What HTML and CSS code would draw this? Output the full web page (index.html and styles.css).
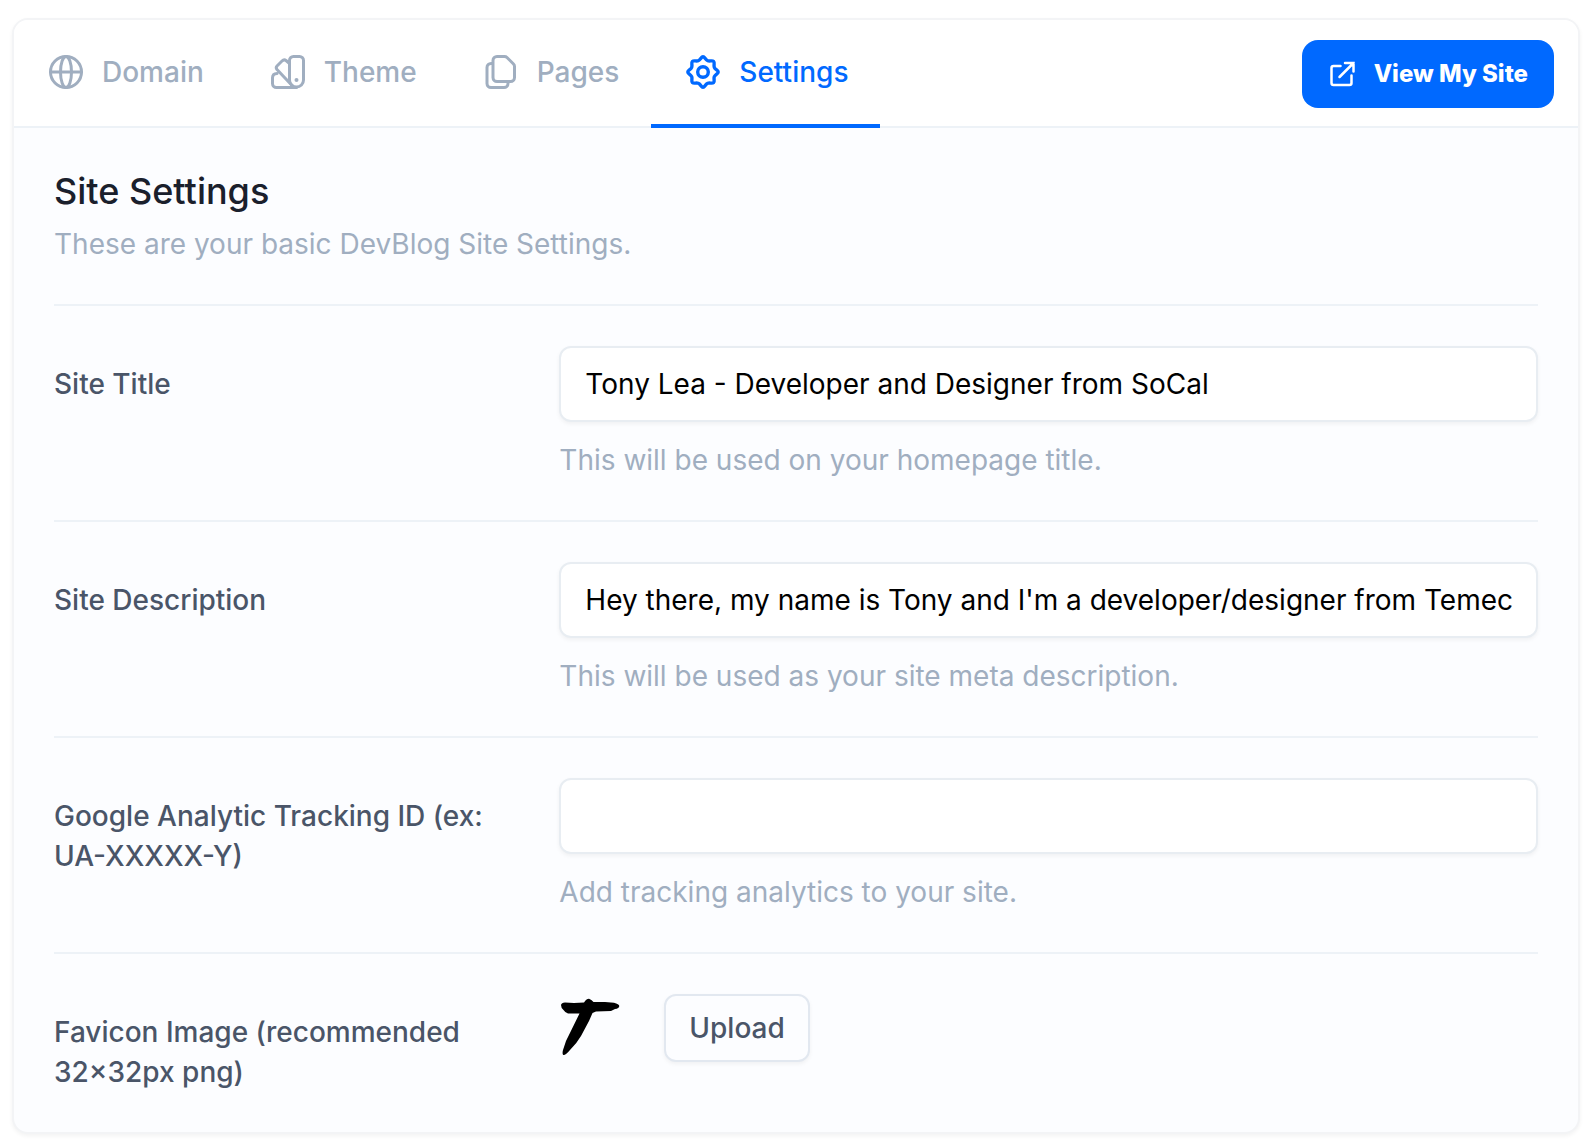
FILE: index.html
```html
<!DOCTYPE html>
<html lang="en">
<head>
<meta charset="utf-8">
<meta name="viewport" content="width=device-width, initial-scale=1">
<title>Site Settings</title>
<link rel="stylesheet" href="styles.css">
</head>
<body>
<main class="card">
  <header class="card-header">
    <nav class="tabs" aria-label="Site sections">
      <a class="tab" href="#domain">
        <svg class="tab-icon" viewBox="0 0 40 40" aria-hidden="true"><circle cx="20" cy="20" r="15.5"/><ellipse cx="20" cy="20" rx="5.5" ry="15.5"/><path d="M4.500 20h31"/></svg>
        <span>Domain</span>
      </a>
      <a class="tab" href="#theme">
        <svg class="tab-icon" viewBox="0 0 40 40" aria-hidden="true"><path d="M21.500 28V8.500a4 4 0 0 1 4-4h6a4 4 0 0 1 4 4V28a7 7 0 0 1-14 0z"/><path d="M28.500 35.500H8.500a4 4 0 0 1-4-4V26q0-4.500 4.500-4.500M21.500 11.500 18 8.500q-2-1.500-4 .5L9 14q-1.500 1.500 0 3.500L25 34.500"/><circle class="dot" cx="28.500" cy="28" r="2"/></svg>
        <span>Theme</span>
      </a>
      <a class="tab" href="#pages">
        <svg class="tab-icon" viewBox="0 0 40 40" aria-hidden="true"><path d="M16 4.500h7.500q1.500 0 2.500 1L32.500 12q1 1 1 2.500v11a4 4 0 0 1-4 4H16a4 4 0 0 1-4-4v-17a4 4 0 0 1 4-4z"/><path d="M11.500 11.500H10a4 4 0 0 0-4 4v16a4 4 0 0 0 4 4h13a4 4 0 0 0 4-4v-2"/></svg>
        <span>Pages</span>
      </a>
      <a class="tab tab-active" href="#settings" aria-current="page">
        <svg class="tab-icon" viewBox="0 0 40 40" aria-hidden="true"><circle cx="20" cy="20" r="5.300"/><path d="M20 4.800C21.900 4.800 22 7.600 24.700 8.700C26.800 9.600 29.200 8 30.600 9.400C32 10.800 30.400 13.200 31.300 15.300C32.400 18 35.200 18.100 35.200 20C35.200 21.900 32.400 22 31.300 24.700C30.400 26.800 32 29.200 30.600 30.600C29.200 32 26.800 30.400 24.700 31.300C22 32.400 21.900 35.200 20 35.200C18.100 35.200 18 32.400 15.300 31.300C13.200 30.400 10.800 32 9.400 30.600C8 29.200 9.600 26.800 8.700 24.700C7.600 22 4.800 21.900 4.800 20C4.800 18.100 7.600 18 8.700 15.300C9.600 13.200 8 10.800 9.400 9.400C10.800 8 13.200 9.600 15.300 8.700C18 7.600 18.100 4.800 20 4.800z"/></svg>
        <span>Settings</span>
      </a>
    </nav>
    <a class="view-button" href="#site">
      <svg class="view-icon" viewBox="0 0 28 28" aria-hidden="true"><path d="M12.500 6H5.500a2 2 0 0 0-2 2v15a2 2 0 0 0 2 2h16a2 2 0 0 0 2-2v-7.500M17 3h8.500v8.500M25.500 3 11.500 17"/></svg>
      <span>View My Site</span>
    </a>
  </header>
  <form class="settings">
    <div class="intro">
      <h1 class="title">Site Settings</h1>
      <p class="subtitle">These are your basic DevBlog Site Settings.</p>
    </div>
    <div class="row">
      <label class="label" for="site-title">Site Title</label>
      <div class="field">
        <input class="input" id="site-title" type="text" value="Tony Lea - Developer and Designer from SoCal">
        <p class="help">This will be used on your homepage title.</p>
      </div>
    </div>
    <div class="row">
      <label class="label" for="site-description">Site Description</label>
      <div class="field">
        <input class="input" id="site-description" type="text" value="Hey there, my name is Tony and I'm a developer/designer from Temecula">
        <p class="help">This will be used as your site meta description.</p>
      </div>
    </div>
    <div class="row">
      <label class="label" for="tracking-id">Google Analytic Tracking ID (ex: UA-XXXXX-Y)</label>
      <div class="field">
        <input class="input" id="tracking-id" type="text">
        <p class="help">Add tracking analytics to your site.</p>
      </div>
    </div>
    <div class="row">
      <label class="label" for="upload">Favicon Image (recommended 32×32px png)</label>
      <div class="field upload-field">
        <svg class="favicon" viewBox="0 0 64 64" role="img" aria-label="Current favicon"><path d="M2 11Q2.500 8.500 6 8.500L15 9L25 8.500Q27 5 30 4.800Q32.500 5.500 34.500 8L46 8L55 8.700Q60 10 60.300 12Q60 14.500 56 15L52 17L37 17.500L33.500 19L30 27L22 42Q18 49 11 56Q6.500 61.500 4.300 61Q3 60 4 56L7 47L20.500 19.500L9 19.500Q6 18.500 4.500 16Q2 14 2 11z"/></svg>
        <button class="upload-button" id="upload" type="button">Upload</button>
      </div>
    </div>
  </form>
</main>
</body>
</html>
```

FILE: styles.css
```css
* {
  box-sizing: border-box;
}

body {
  margin: 0;
  padding: 18px 14px 12px 12px;
  background: #fff;
  color: #4a5568;
  font-family: Inter, "Liberation Sans", sans-serif;
  font-size: 28px;
  line-height: 40px;
}

.card {
  overflow: hidden;
  border: 2px solid #f3f4f6;
  border-radius: 16px;
  background: #fcfdff;
  box-shadow: 0 2px 4px rgba(0, 0, 0, 0.05);
}

.card-header {
  display: flex;
  align-items: flex-start;
  justify-content: space-between;
  padding-right: 24px;
  border-bottom: 2px solid #edf2f7;
  background: #fff;
}

.tabs {
  display: flex;
  margin-bottom: -2px;
}

.tab {
  display: flex;
  align-items: center;
  gap: 16px;
  padding: 32px;
  border-bottom: 4px solid transparent;
  color: #a0aec0;
  font-weight: 500;
  text-decoration: none;
}

.tab-active {
  border-color: #0069ff;
  color: #0069ff;
}

.tab-icon {
  width: 40px;
  height: 40px;
  fill: none;
  stroke: currentColor;
  stroke-width: 3;
  stroke-linecap: round;
  stroke-linejoin: round;
}

.tab-active .tab-icon {
  stroke-width: 3.4;
}

.dot {
  fill: currentColor;
  stroke: none;
}

.view-button {
  display: flex;
  align-items: center;
  gap: 18px;
  margin-top: 20px;
  padding: 14px 26px;
  border-radius: 16px;
  background: #0069ff;
  color: #fff;
  font-size: 24px;
  font-weight: 800;
  text-decoration: none;
}

.view-icon {
  width: 28px;
  height: 28px;
  fill: none;
  stroke: currentColor;
  stroke-width: 2.5;
  stroke-linecap: round;
}

.settings {
  padding: 40px;
}

.intro {
  padding-bottom: 40px;
}

.title {
  margin: 0;
  color: #1a202c;
  font-size: 36px;
  font-weight: 500;
  line-height: 46px;
}

.subtitle {
  margin: 10px 0 0;
  color: #a0aec0;
}

.row {
  display: grid;
  grid-template-columns: repeat(3, 1fr);
  column-gap: 32px;
  padding: 40px 0;
  border-top: 2px solid #edf2f7;
}

.row:last-child {
  padding-bottom: 0;
}

.label {
  padding-top: 18px;
  font-weight: 500;
}

.field {
  grid-column: span 2;
}

.input {
  display: block;
  width: 100%;
  height: 76px;
  padding: 0 24px;
  border: 2px solid #e8edf2;
  border-radius: 12px;
  background: #fff;
  box-shadow: 0 2px 4px rgba(0, 0, 0, 0.05);
  color: #000;
  font: inherit;
}

.help {
  margin: 18px 0 0;
  color: #a0aec0;
}

.upload-field {
  display: flex;
  align-items: flex-start;
  gap: 41px;
}

.favicon {
  width: 64px;
  height: 64px;
}

.upload-button {
  height: 68px;
  padding: 0 23px;
  border: 2px solid #e2e8f0;
  border-radius: 12px;
  background: #fcfdff;
  box-shadow: 0 2px 4px rgba(0, 0, 0, 0.05);
  color: #4a5568;
  font: inherit;
  font-weight: 500;
}
```
